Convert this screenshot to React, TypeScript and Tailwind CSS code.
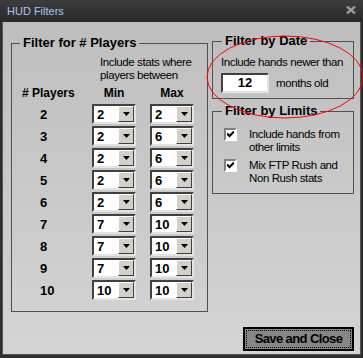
import React from "react";

// Player count rows: [players, min, max]
const rows: [string, string, string][] = [
  ["2", "2", "2"],
  ["3", "2", "6"],
  ["4", "2", "6"],
  ["5", "2", "6"],
  ["6", "2", "6"],
  ["7", "7", "10"],
  ["8", "7", "10"],
  ["9", "7", "10"],
  ["10", "10", "10"],
];

function Combo({ value }: { value: string }) {
  return (
    <div className="flex h-[20px] w-[44px] border-2 border-t-[#404040] border-l-[#404040] border-r-[#e4e4e4] border-b-[#e4e4e4] bg-white">
      <span className="flex-1 pl-[3px] pt-[2px] text-[13px] font-bold leading-[14px]">{value}</span>
      <span className="flex w-[16px] items-center justify-center border border-t-white border-l-white border-r-[#404040] border-b-[#404040] bg-[#d4d0c8]">
        <svg width="7" height="4" viewBox="0 0 7 4">
          <path d="M0 0h7L3.5 4z" fill="#000" />
        </svg>
      </span>
    </div>
  );
}

function Check({ children }: { children: React.ReactNode }) {
  return (
    <div className="flex items-start">
      <span className="flex h-[13px] w-[13px] shrink-0 items-center justify-center border-2 border-t-[#808080] border-l-[#808080] border-r-white border-b-white bg-white">
        <svg width="7" height="7" viewBox="0 0 7 7">
          <path d="M0 2.5l2.5 2.5L7 0.5" stroke="#000" strokeWidth="2" fill="none" />
        </svg>
      </span>
      <span className="ml-[12px] whitespace-nowrap text-[11.5px] leading-[13px] tracking-[-0.4px]">{children}</span>
    </div>
  );
}

export default function App() {
  return (
    <div className="relative flex h-[358px] w-[363px] flex-col bg-[#2e2e2e] font-['Liberation_Sans',Arial,sans-serif] text-black">
      {/* title bar */}
      <div className="flex h-[22px] items-center justify-between bg-linear-to-b from-[#3c3c3c] to-[#2a2a2a] pl-[7px] pr-[7px]">
        <span className="text-[11px] text-[#a9c6ec]">HUD Filters</span>
        <svg width="10" height="8" viewBox="0 0 10 8" className="mb-[2px]">
          <path d="M1 0.5L9 7.5M9 0.5L1 7.5" stroke="#9a9a9a" strokeWidth="2.4" />
        </svg>
      </div>

      <div className="mx-[2px] mb-[3px] flex flex-1 flex-col border border-t-0 border-[#555] bg-linear-to-b from-[#bebebe] to-[#d4d4d4]">
        <div className="flex">
          {/* Filter for # Players */}
          <fieldset className="ml-[8px] mt-[13px] h-[277px] w-[197px] border border-[#505050] px-0 pt-[5px]">
            <legend className="ml-[8px] px-[3px] text-[13px] font-bold leading-[16px]">Filter for # Players</legend>
            <div className="pl-[88px] text-[11.5px] leading-[13px] tracking-[-0.4px]">
              Include stats where
              <br />
              players between
            </div>
            <div className="mt-[4px] flex text-[12px] font-bold leading-[14px]">
              <span className="w-[80px] pl-[10px]">&#35; Players</span>
              <span className="w-[44px] text-center">Min</span>
              <span className="ml-[14px] w-[44px] text-center">Max</span>
            </div>
            <div className="mt-[4px] flex flex-col gap-[2px]">
              {rows.map(([n, min, max]) => (
                <div key={n} className="flex h-[20px]">
                  <span className="w-[80px] pl-[28px] pt-[4px] text-[13px] font-bold leading-[14px]">{n}</span>
                  <Combo value={min} />
                  <div className="ml-[14px]">
                    <Combo value={max} />
                  </div>
                </div>
              ))}
            </div>
          </fieldset>

          <div className="ml-[4px] flex w-[142px] flex-col">
            {/* Filter by Date */}
            <fieldset className="mt-[11px] border border-[#505050] px-0 pb-[5px] pt-[7px]">
              <legend className="ml-[9px] px-[3px] text-[13px] font-bold leading-[16px]">Filter by Date</legend>
              <div className="whitespace-nowrap pl-[8px] text-[11.5px] leading-[13px] tracking-[-0.4px]">Include hands newer than</div>
              <div className="mt-[4px] flex items-center pl-[8px]">
                <div className="flex h-[20px] w-[48px] items-center justify-center border-2 border-t-[#404040] border-l-[#404040] border-r-[#e4e4e4] border-b-[#e4e4e4] bg-white text-[13px] font-bold">
                  12
                </div>
                <span className="ml-[7px] pt-[2px] text-[11.5px] tracking-[-0.4px]">months old</span>
              </div>
            </fieldset>

            {/* Filter by Limits */}
            <fieldset className="mt-[4px] border border-[#505050] px-0 pb-[8px] pl-[11px] pt-[9px]">
              <legend className="ml-[-2px] px-[3px] text-[13px] font-bold leading-[16px]">Filter by Limits</legend>
              <Check>
                Include hands from
                <br />
                other limits
              </Check>
              <div className="mt-[5px]">
                <Check>
                  Mix FTP Rush and
                  <br />
                  Non Rush stats
                </Check>
              </div>
            </fieldset>
          </div>
        </div>

        <div className="mr-[6px] mt-[15px] flex justify-end">
          <button className="h-[24px] w-[111px] border-2 border-black bg-[#868686] p-[1px]">
            <span className="flex h-full w-full items-center justify-center border border-dotted border-black text-[13px] font-bold tracking-[-0.6px]">
              Save and Close
            </span>
          </button>
        </div>
      </div>

      {/* red annotation ellipse */}
      <svg className="pointer-events-none absolute inset-0" width="363" height="358">
        <ellipse cx="285" cy="77" rx="78" ry="41" fill="none" stroke="#ff0000" strokeWidth="1" />
      </svg>
    </div>
  );
}
